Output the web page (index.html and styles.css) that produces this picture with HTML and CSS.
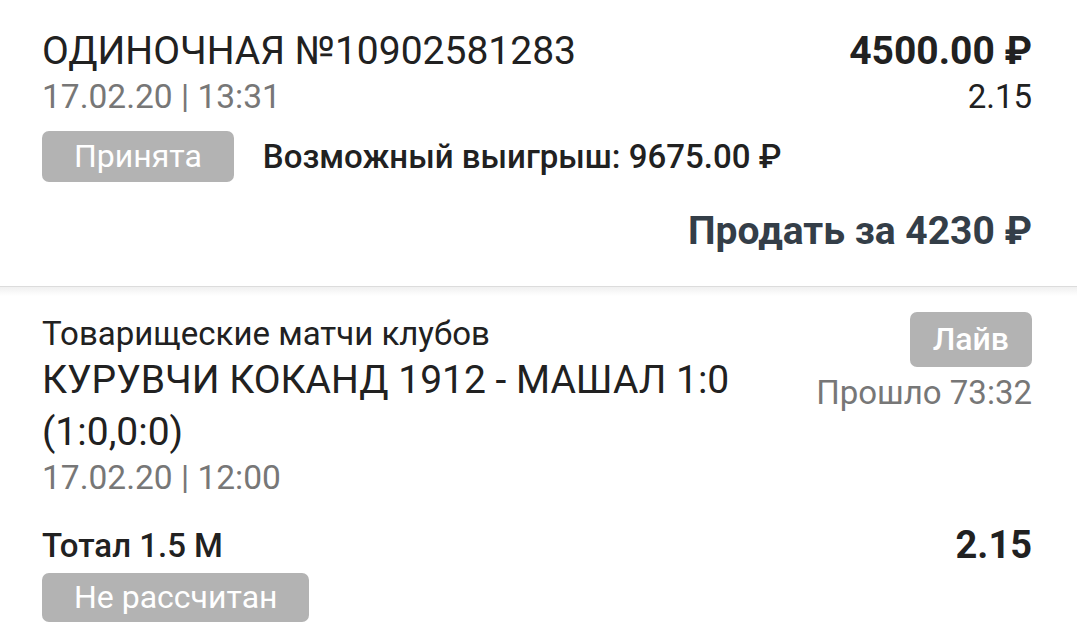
FILE: index.html
```html
<!DOCTYPE html>
<html lang="ru">
<head>
    <meta charset="UTF-8">
    <meta name="viewport" content="width=device-width, initial-scale=1.0">
    <title>Одиночная ставка</title>
    <link rel="stylesheet" href="styles.css">
</head>
<body>
    <!-- Шапка купона -->
    <div class="coupon">
        <div class="row">
            <div>
                <div class="title">ОДИНОЧНАЯ №10902581283</div>
                <div class="date">17.02.20 | 13:31</div>
            </div>
            <div class="right">
                <div class="amount">4500.00 ₽</div>
                <div class="coef">2.15</div>
            </div>
        </div>
        <div class="status-row">
            <span class="badge">Принята</span>
            <span class="win">Возможный выигрыш: 9675.00 ₽</span>
        </div>
        <div class="sell">Продать за 4230 ₽</div>
    </div>

    <div class="divider"></div>

    <!-- Событие -->
    <div class="event">
        <div class="row">
            <div class="event-info">
                <div class="league">Товарищеские матчи клубов</div>
                <div class="teams">КУРУВЧИ КОКАНД 1912 - МАШАЛ 1:0 (1:0,0:0)</div>
                <div class="date">17.02.20 | 12:00</div>
            </div>
            <div class="right">
                <span class="badge badge-live">Лайв</span>
                <div class="elapsed">Прошло 73:32</div>
            </div>
        </div>
        <div class="row outcome">
            <div class="market">Тотал 1.5 М</div>
            <div class="outcome-coef">2.15</div>
        </div>
        <span class="badge badge-result">Не рассчитан</span>
    </div>
</body>
</html>
```

FILE: styles.css
```css
body {
    margin: 0;
    background-color: #fff;
    font-family: Roboto, "Liberation Sans", sans-serif;
    color: #212121;
}
.coupon {
    padding: 25px 45px 0 42px;
}
.row {
    display: flex;
    justify-content: space-between;
    gap: 24px;
}
.right {
    display: flex;
    flex-direction: column;
    align-items: flex-end;
    flex-shrink: 0;
}
.title {
    font-size: 39px;
    line-height: 52px;
}
.date {
    font-size: 33.5px;
    line-height: 40px;
    color: #777;
}
.amount {
    font-size: 39px;
    line-height: 52px;
    font-weight: 700;
}
.coef {
    font-size: 33px;
    line-height: 40px;
}
.status-row {
    display: flex;
    align-items: center;
    gap: 29px;
    margin-top: 14px;
}
.badge {
    display: inline-block;
    background-color: #b3b3b3;
    color: #fff;
    font-size: 32px;
    line-height: 51px;
    padding: 0 32px;
    border-radius: 7px;
}
.win {
    font-size: 33px;
    font-weight: 500;
}
.sell {
    text-align: right;
    font-size: 39px;
    line-height: 52px;
    font-weight: 700;
    color: #343e48;
    margin-top: 23px;
    padding-bottom: 29px;
}
.divider {
    height: 9px;
    border-top: 1px solid #dcdcdc;
    background: linear-gradient(#f0f0f0, #fff);
}
.event {
    padding: 18px 45px 0 42px;
}
.event-info {
    flex: 1;
}
.league {
    font-size: 33px;
    line-height: 40px;
}
.teams {
    font-size: 39px;
    line-height: 52px;
}
.badge-live {
    font-weight: 500;
    line-height: 55px;
    padding: 0 23px;
    margin-top: -2px;
}
.elapsed {
    font-size: 33px;
    line-height: 40px;
    color: #777;
    margin-top: 6px;
}
.outcome {
    align-items: center;
    margin-top: 25px;
}
.market {
    font-size: 33px;
    font-weight: 500;
}
.outcome-coef {
    font-size: 38px;
    font-weight: 700;
}
.badge-result {
    line-height: 49px;
    margin-top: 6px;
}
```
